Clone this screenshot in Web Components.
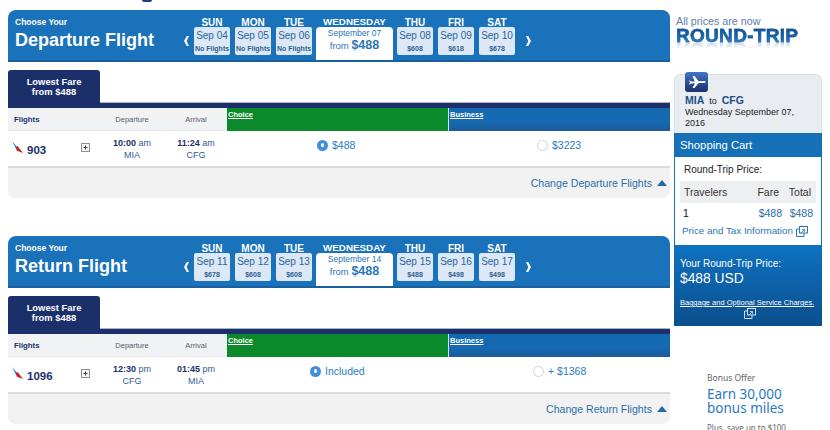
<!DOCTYPE html>
<html>
<head>
<meta charset="utf-8">
<title>Choose flights</title>
<style>
  html, body { margin: 0; padding: 0; background: #fff; }
  body { font-family: "Liberation Sans", Arial, sans-serif; width: 830px; height: 430px; overflow: hidden; }
  booking-page { width: 830px; height: 430px; }
</style>
</head>
<body>
<booking-page>
  <flight-section slot="flights" kind="Departure" month-date="September 07"
    days="Sep 04|No Flights,Sep 05|No Flights,Sep 06|No Flights,Sep 08|$608,Sep 09|$618,Sep 10|$678"
    flight="903" depart="10:00" depart-ap="am" from="MIA" arrive="11:24" arrive-ap="am" to="CFG"
    choice="$488" choice-at="90" business="$3223" business-at="89"></flight-section>
  <flight-section slot="flights" kind="Return" month-date="September 14"
    days="Sep 11|$678,Sep 12|$608,Sep 13|$608,Sep 15|$488,Sep 16|$498,Sep 17|$498"
    flight="1096" depart="12:30" depart-ap="pm" from="CFG" arrive="01:45" arrive-ap="pm" to="MIA"
    choice="Included" choice-at="83" business="+ $1368" business-at="85"></flight-section>
  <trip-sidebar slot="side"></trip-sidebar>
</booking-page>

<script>
// page frame: flight column + sidebar
class BookingPage extends HTMLElement {
  constructor() {
    super();
    this.attachShadow({ mode: 'open' });
    this.shadowRoot.innerHTML = `
      <style>
        :host { display: grid; grid-template-columns: 662px 148px; column-gap: 4px; padding: 10px 0 0 8px; box-sizing: border-box; overflow: hidden; position: relative; }
        .flights { display: flex; flex-direction: column; gap: 38px; }
        /* tail of the page heading, cut off by the top of the window */
        .tail { position: absolute; left: 142px; top: 0; width: 10px; height: 1.5px; background: #1b3f7d; border-radius: 0 0 5px 5px; }
      </style>
      <div class="tail"></div>
      <div class="flights"><slot name="flights"></slot></div>
      <slot name="side"></slot>
    `;
  }
}

const extIcon = (color) => `<svg width="12" height="11" viewBox="0 0 12 11" fill="none" stroke="${color}" stroke-width="1"><rect x="3.5" y=".5" width="8" height="6.5"/><path d="M3.5 3H.5v7.500h7.500V7"/><path d="M5 7l3.500-3.500M6 3.500h2.500V6" stroke-width=".8"/></svg>`;

class DayCell extends HTMLElement {
  constructor() {
    super();
    this.attachShadow({ mode: 'open' });
    this.shadowRoot.innerHTML = `
      <style>
        :host { display: flex; flex-direction: column; align-items: center; width: 36px; }
        .day { height: 10px; line-height: 11px; font-size: 10px; font-weight: bold; color: #fff; text-align: center; }
        .cell { box-sizing: border-box; width: 36px; height: 28px; background: #dce8f5; border-radius: 2px; text-align: center; padding-top: 3px; }
        .date { font-size: 10px; line-height: 11px; color: #28659c; }
        .sub { font-size: 7px; font-weight: bold; line-height: 9px; margin-top: 3px; color: #2f6290; white-space: nowrap; }
      </style>
      <div class="day"></div>
      <div class="cell"><div class="date"></div><div class="sub"></div></div>
    `;
  }
  connectedCallback() {
    const s = this.shadowRoot;
    s.querySelector('.day').textContent = this.getAttribute('day');
    s.querySelector('.date').textContent = this.getAttribute('date');
    s.querySelector('.sub').textContent = this.getAttribute('sub');
  }
}

class FlightSection extends HTMLElement {
  constructor() {
    super();
    this.attachShadow({ mode: 'open' });
  }
  connectedCallback() {
    const a = (n) => this.getAttribute(n);
    const names = ['SUN', 'MON', 'TUE', 'THU', 'FRI', 'SAT'];
    const days = a('days').split(',').map((d, i) => {
      const [date, sub] = d.split('|');
      return `<day-cell day="${names[i]}" date="${date}" sub="${sub}"></day-cell>`;
    });
    this.shadowRoot.innerHTML = `
      <style>
        :host { display: block; width: 662px; color: #1b2f6b; }
        .head { box-sizing: border-box; height: 52px; background: #1a72bb; border-bottom: 2px solid #1a5f9f; border-radius: 8px 8px 0 0; display: flex; }
        .title { width: 171px; padding: 7px 0 0 7px; box-sizing: border-box; color: #fff; font-weight: bold; flex: none; }
        .title small { display: block; font-size: 8.5px; line-height: 10px; }
        .title b { display: block; font-size: 18px; line-height: 20px; margin-top: 3px; white-space: nowrap; }
        .arrow { flex: none; width: 15px; text-align: center; align-self: flex-start; }
        .arrow svg { display: block; margin: 26px auto 0; }
        .strip { display: flex; gap: 5px; padding-top: 7px; flex: none; }
        .wed { width: 77px; margin: -1px -1px 0 -1px; display: flex; flex-direction: column; }
        .wed .name { height: 11px; line-height: 11px; font-size: 9.8px; font-weight: bold; color: #fff; text-align: center; white-space: nowrap; }
        .wed .box { height: 35px; background: #fff; border-radius: 4px 4px 0 0; text-align: center; color: #2a76b8; font-size: 8.5px; padding-top: 1px; box-sizing: border-box; line-height: 11px; }
        .wed .from { font-size: 9.5px; line-height: 13px; }
        .wed .from b { font-size: 12.5px; }
        .tabs { height: 32px; margin-top: 8px; border-bottom: 1px solid #aab5c9; }
        .tab { box-sizing: border-box; width: 92px; height: 33px; background: #1b2f6b; border-radius: 3px 3px 0 0; color: #fff; font-size: 9.4px; font-weight: bold; line-height: 10px; text-align: center; padding-top: 7px; }
        .bar { height: 5px; background: #1b2f6b; }
        .cols { display: grid; grid-template-columns: 219px 221px 222px; height: 22px; background: #f1f2f3; border-bottom: 1px solid #e6e7e8; }
        .labels { display: grid; grid-template-columns: 91px 66px 62px; align-items: center; font-size: 7.5px; color: #55606e; text-align: center; height: 22px; }
        .labels b { text-align: left; padding-left: 6px; color: #1b2f6b; font-size: 7.8px; }
        .fare-head { color: #fff; font-size: 7.5px; font-weight: bold; text-decoration: underline; line-height: 9px; padding: 2px 0 0 1px; }
        .choice { background: #0b8a2c; height: 23px; box-sizing: border-box; }
        .biz { background: linear-gradient(#1569b1 60%, #1c5a9b); border-left: 1px solid #d6e4f0; height: 23px; box-sizing: border-box; }
        .row { display: grid; grid-template-columns: 19px 50px 22px 66px 62px 221px 222px; height: 35px; border-bottom: 2px solid #d9dadb; align-items: start; }
        .logo { padding: 10px 0 0 4px; }
        .logo svg, .plus svg { display: block; }
        .num { font-size: 11.5px; font-weight: bold; padding-top: 12px; line-height: 14px; color: #1b2f6b; }
        .plus { padding: 12px 0 0 4px; }
        .time { text-align: center; font-size: 9px; line-height: 12px; padding-top: 6px; color: #3a5688; white-space: nowrap; }
        .time b { color: #1b2f6b; }
        .time span { color: #2a5f95; display: block; }
        .fare { display: flex; align-items: center; gap: 4px; font-size: 10.5px; color: #2a7cc3; height: 14px; margin-top: 7px; white-space: nowrap; }
        .radio { width: 11px; height: 11px; border-radius: 50%; box-sizing: border-box; flex: none; }
        .radio.on { background: #3f8fe0; display: flex; align-items: center; justify-content: center; }
        .radio.on::after { content: ""; width: 3.5px; height: 3.5px; border-radius: 50%; background: #fff; }
        .radio.off { border: 1px solid #cfd3d6; background: #fff; }
        .foot { height: 30px; background: #f2f2f3; border-radius: 0 0 7px 7px; display: flex; align-items: center; justify-content: flex-end; padding: 0 3px 1px 0; box-sizing: border-box; color: #2a6ea8; font-size: 10.6px; gap: 5px; }
        .foot svg { display: block; }
      </style>
      <div class="head">
        <div class="title"><small>Choose Your</small><b>${a('kind')} Flight</b></div>
        <div class="arrow"><svg width="5" height="10" viewBox="0 0 5 10"><path d="M5 0L2.600 5 5 10H2.800L0 5l2.800-5z" fill="#fff"/></svg></div>
        <div class="strip">
          ${days.slice(0, 3).join('')}
          <div class="wed"><div class="name">WEDNESDAY</div>
            <div class="box">${a('month-date')}<div class="from">from <b>$488</b></div></div></div>
          ${days.slice(3).join('')}
        </div>
        <div class="arrow" style="margin-left:6px"><svg width="5" height="10" viewBox="0 0 5 10"><path d="M0 0l2.400 5L0 10h2.200L5 5 2.200 0z" fill="#fff"/></svg></div>
      </div>
      <div class="tabs"><div class="tab">Lowest Fare<br>from $488</div></div>
      <div class="bar"></div>
      <div class="cols">
        <div class="labels"><b>Flights</b><span>Departure</span><span>Arrival</span></div>
        <div class="fare-head choice">Choice</div>
        <div class="fare-head biz">Business</div>
      </div>
      <div class="row">
        <div class="logo"><svg width="11" height="12" viewBox="0 0 11 12"><path d="M0 0l5.200 6-1.500 1.300z" fill="#2f86c8"/><path d="M3.500 6.600l2-1.500L11 12 5 9.800z" fill="#c8202f"/></svg></div>
        <div class="num">${a('flight')}</div>
        <div class="plus"><svg width="9" height="9" viewBox="0 0 9 9"><rect x=".5" y=".5" width="8" height="8" fill="#f6f6f6" stroke="#8d8f92"/><path d="M2.500 4.500h4M4.500 2.500v4" stroke="#444"/></svg></div>
        <div class="time"><b>${a('depart')}</b> ${a('depart-ap')}<span>${a('from')}</span></div>
        <div class="time"><b>${a('arrive')}</b> ${a('arrive-ap')}<span>${a('to')}</span></div>
        <div style="padding-left:${a('choice-at')}px"><div class="fare"><i class="radio on"></i>${a('choice')}</div></div>
        <div style="padding-left:${a('business-at')}px"><div class="fare"><i class="radio off"></i>${a('business')}</div></div>
      </div>
      <div class="foot">Change ${a('kind')} Flights <svg width="10" height="6" viewBox="0 0 10 6"><path d="M5 0l5 6H0z" fill="#1f6aa8"/></svg></div>
    `;
  }
}

class TripSidebar extends HTMLElement {
  constructor() {
    super();
    this.attachShadow({ mode: 'open' });
    this.shadowRoot.innerHTML = `
      <style>
        :host { display: block; width: 148px; color: #222; font-size: 10px; }
        .promo { height: 64px; padding: 5px 0 0 2px; box-sizing: border-box; }
        .promo p { margin: 0; font-size: 10.7px; line-height: 12px; color: #5b80ab; white-space: nowrap; }
        .promo strong { display: block; width: 124px; font-size: 19px; line-height: 17px; letter-spacing: .3px; font-weight: bold; white-space: nowrap;
          background: linear-gradient(#0f4f94 0%, #1a6db5 70%, #5c97cc 100%); -webkit-background-clip: text; background-clip: text; color: transparent; -webkit-text-stroke: .4px #11508f;
          -webkit-box-reflect: below -3px linear-gradient(transparent 55%, rgba(255,255,255,.35)); }
        .route { position: relative; box-sizing: border-box; height: 59px; background: #e9ecf1; border: 1px solid #dde1e6; border-bottom: none; border-radius: 6px 6px 0 0; padding: 20px 4px 0 10px; font-size: 9px; line-height: 11px; }
        .route b { color: #1b4f8a; font-size: 10.5px; }
        .plane { position: absolute; left: 10px; top: -3px; width: 23px; height: 20px; border-radius: 3px; background: linear-gradient(#3f76c4, #1b2f6b); display: flex; align-items: center; justify-content: center; }
        .cart-title { background: #1570b8; color: #fff; font-size: 11.3px; height: 24px; line-height: 24px; padding-left: 6px; }
        .cart { box-sizing: border-box; height: 88px; border: 1px solid #1570b8; border-width: 0 1px; padding: 7px 5px 0 5px; background: #fff; }
        .cart .rt { font-size: 10px; line-height: 12px; color: #222; padding-left: 4px; }
        .t { display: grid; grid-template-columns: 1fr 33px 31px; margin-top: 5px; font-size: 10.5px; }
        .t span { padding: 0 0 0 4px; height: 22px; line-height: 22px; background: #eeeff1; color: #333; }
        .t span + span { text-align: right; padding: 0 6px 0 0; }
        .t span:nth-child(3) { padding-right: 5px; }
        .t i { font-style: normal; height: 20px; line-height: 20px; color: #2a6ea8; text-align: right; padding-right: 3px; }
        .t i:nth-child(4) { text-align: left; padding-left: 3px; color: #111; }
        .info { color: #2a76b8; font-size: 9.8px; line-height: 14px; display: flex; align-items: center; gap: 3px; white-space: nowrap; padding-left: 2px; margin-top: 1px; }
        .total { box-sizing: border-box; height: 81px; background: linear-gradient(#0e72c0, #0b4f8e); color: #fff; padding: 13px 2px 0 6px; }
        .total .l { font-size: 10px; line-height: 12px; }
        .total .p { font-size: 13.8px; line-height: 16px; margin-top: 1px; }
        .total a { display: block; color: #fff; text-decoration: underline; font-size: 7.5px; line-height: 10px; margin-top: 11px; white-space: nowrap; }
        .total .ic { text-align: center; height: 11px; line-height: 0; }
        .bonus { margin: 46px 0 0 33px; font-family: "Noto Sans", "Open Sans", sans-serif; }
        .bonus .a { font-size: 8.5px; line-height: 12px; color: #666; }
        .bonus .b { font-size: 13.5px; line-height: 13.5px; color: #2a78c4; margin-top: 4px; white-space: nowrap; }
        .bonus .c { font-size: 8px; line-height: 10px; color: #666; margin-top: 8px; white-space: nowrap; }
      </style>
      <div class="promo"><p>All prices are now</p><strong>ROUND-TRIP</strong></div>
      <div class="route">
        <div class="plane"><svg width="18" height="12" viewBox="0 0 18 12"><path d="M1 4l2 1.600 3.800-.2L4.500 0h2l4.200 5.200 4.300-.1c2.300 0 3 .7 3 1s-.7.9-3 .9l-4.400.1L6.500 12h-2l2.400-4.800-3.900.2L1 9l1-2.500z" fill="#fff"/></svg></div>
        <b>MIA</b> &nbsp;to&nbsp; <b>CFG</b><br>Wednesday September 07,<br>2016
      </div>
      <div class="cart-title">Shopping Cart</div>
      <div class="cart">
        <div class="rt">Round-Trip Price:</div>
        <div class="t"><span>Travelers</span><span>Fare</span><span>Total</span><i>1</i><i>$488</i><i>$488</i></div>
        <div class="info">Price and Tax Information ${extIcon('#2a76b8')}</div>
      </div>
      <div class="total">
        <div class="l">Your Round-Trip Price:</div>
        <div class="p">$488 USD</div>
        <a>Baggage and Optional Service Charges.</a>
        <div class="ic">${extIcon('#cfe2f3')}</div>
      </div>
      <div class="bonus">
        <div class="a">Bonus Offer</div>
        <div class="b">Earn 30,000<br>bonus miles</div>
        <div class="c">Plus, save up to $100</div>
      </div>
    `;
  }
}

customElements.define('day-cell', DayCell);
customElements.define('flight-section', FlightSection);
customElements.define('trip-sidebar', TripSidebar);
customElements.define('booking-page', BookingPage);
</script>
</body>
</html>
